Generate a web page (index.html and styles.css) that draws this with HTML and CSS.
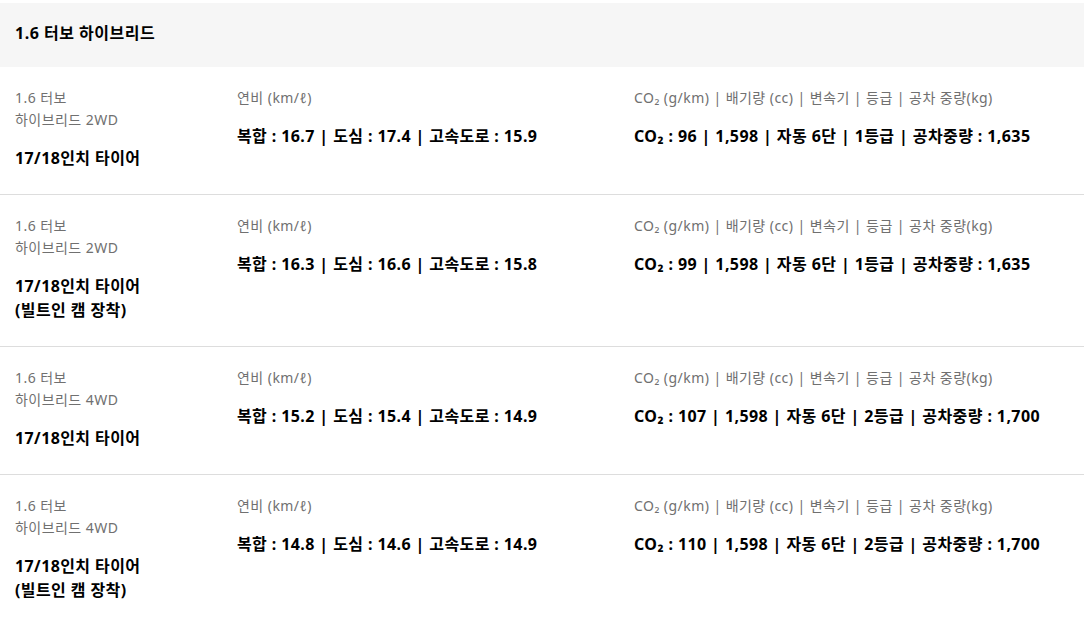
FILE: index.html
```html
<!DOCTYPE html>
<html lang="ko">
<head>
<meta charset="UTF-8">
<meta name="viewport" content="width=device-width, initial-scale=1.0">
<title>1.6 터보 하이브리드</title>
<link rel="stylesheet" href="styles.css">
</head>
<body>

<div class="spec">
  <div class="spec-head">1.6 터보 하이브리드</div>

  <div class="row">
    <div class="col-trim">
      <div class="label">1.6 터보<br>하이브리드 2WD</div>
      <div class="tire">17/18인치 타이어</div>
    </div>
    <div class="col-fuel">
      <div class="label">연비 (km/ℓ)</div>
      <div class="value">복합 : 16.7 | 도심 : 17.4 | 고속도로 : 15.9</div>
    </div>
    <div class="col-etc">
      <div class="label">CO₂ (g/km) | 배기량 (cc) | 변속기 | 등급 | 공차 중량(kg)</div>
      <div class="value">CO₂ : 96 | 1,598 | 자동 6단 | 1등급 | 공차중량 : 1,635</div>
    </div>
  </div>

  <div class="row">
    <div class="col-trim">
      <div class="label">1.6 터보<br>하이브리드 2WD</div>
      <div class="tire">17/18인치 타이어<br>(빌트인 캠 장착)</div>
    </div>
    <div class="col-fuel">
      <div class="label">연비 (km/ℓ)</div>
      <div class="value">복합 : 16.3 | 도심 : 16.6 | 고속도로 : 15.8</div>
    </div>
    <div class="col-etc">
      <div class="label">CO₂ (g/km) | 배기량 (cc) | 변속기 | 등급 | 공차 중량(kg)</div>
      <div class="value">CO₂ : 99 | 1,598 | 자동 6단 | 1등급 | 공차중량 : 1,635</div>
    </div>
  </div>

  <div class="row">
    <div class="col-trim">
      <div class="label">1.6 터보<br>하이브리드 4WD</div>
      <div class="tire">17/18인치 타이어</div>
    </div>
    <div class="col-fuel">
      <div class="label">연비 (km/ℓ)</div>
      <div class="value">복합 : 15.2 | 도심 : 15.4 | 고속도로 : 14.9</div>
    </div>
    <div class="col-etc">
      <div class="label">CO₂ (g/km) | 배기량 (cc) | 변속기 | 등급 | 공차 중량(kg)</div>
      <div class="value">CO₂ : 107 | 1,598 | 자동 6단 | 2등급 | 공차중량 : 1,700</div>
    </div>
  </div>

  <div class="row">
    <div class="col-trim">
      <div class="label">1.6 터보<br>하이브리드 4WD</div>
      <div class="tire">17/18인치 타이어<br>(빌트인 캠 장착)</div>
    </div>
    <div class="col-fuel">
      <div class="label">연비 (km/ℓ)</div>
      <div class="value">복합 : 14.8 | 도심 : 14.6 | 고속도로 : 14.9</div>
    </div>
    <div class="col-etc">
      <div class="label">CO₂ (g/km) | 배기량 (cc) | 변속기 | 등급 | 공차 중량(kg)</div>
      <div class="value">CO₂ : 110 | 1,598 | 자동 6단 | 2등급 | 공차중량 : 1,700</div>
    </div>
  </div>
</div>

</body>
</html>
```

FILE: styles.css
```css
body {
  margin: 0;
  font-family: "Noto Sans", "Noto Sans CJK KR", sans-serif;
  color: #000;
  background: #fff;
}

.spec {
  padding-top: 3px;
}

.spec-head {
  background: #f6f6f6;
  height: 64px;
  line-height: 60px;
  padding: 0 15px;
  font-size: 16px;
  font-weight: bold;
  letter-spacing: 0.5px;
}

.row {
  display: grid;
  grid-template-columns: 222px 397px 1fr;
  padding: 20px 15px 24px;
  border-bottom: 1px solid #dddddd;
}

.row:last-child {
  border-bottom: none;
}

.label {
  font-size: 14px;
  line-height: 22px;
  color: #707070;
  letter-spacing: 0.45px;
}

.tire {
  margin-top: 15px;
  font-size: 16px;
  line-height: 24px;
  font-weight: bold;
  letter-spacing: 0.4px;
}

.value {
  margin-top: 16px;
  font-size: 16px;
  line-height: 23px;
  font-weight: bold;
  letter-spacing: 0.4px;
}
```
